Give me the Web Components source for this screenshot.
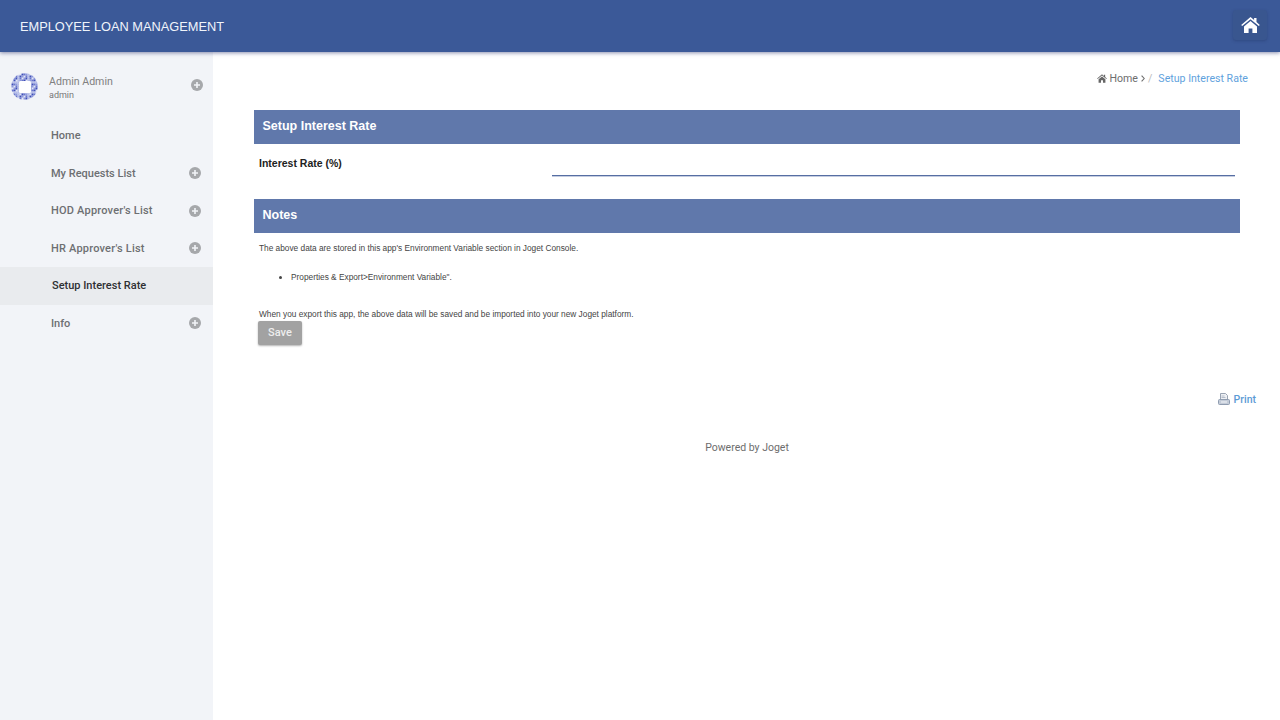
<!DOCTYPE html>
<html>
<head>
<meta charset="utf-8">
<title>Employee Loan Management</title>
<style>
  html, body { margin: 0; height: 100%; background: #fff; }
  body { font-family: Roboto, "Liberation Sans", sans-serif; overflow: hidden; }
</style>
</head>
<body>
<loan-app>
  <app-header slot="header" title-text="EMPLOYEE LOAN MANAGEMENT"></app-header>
  <side-bar slot="side">
    <user-box name="Admin Admin" login="admin"></user-box>
    <nav-item label="Home"></nav-item>
    <nav-item label="My Requests List" more></nav-item>
    <nav-item label="HOD Approver's List" more></nav-item>
    <nav-item label="HR Approver's List" more></nav-item>
    <nav-item label="Setup Interest Rate" active></nav-item>
    <nav-item label="Info" more></nav-item>
  </side-bar>
  <main-area slot="main">
    <bread-crumb slot="crumb" current="Setup Interest Rate"></bread-crumb>
    <form-section heading="Setup Interest Rate">
      <form-field label="Interest Rate (%)"></form-field>
    </form-section>
    <form-section heading="Notes">
      <note-text></note-text>
    </form-section>
    <save-button>Save</save-button>
    <print-link slot="print"></print-link>
    <span slot="footer">Powered by Joget</span>
  </main-area>
</loan-app>

<script>
const plusIcon = `<svg width="12" height="12" viewBox="0 0 12 12"><circle cx="6" cy="6" r="6" fill="#a6a8ab"/><path d="M6 3v6M3 6h6" stroke="#f2f4f8" stroke-width="1.6"/></svg>`;

class LoanApp extends HTMLElement {
  constructor() {
    super();
    this.attachShadow({ mode: 'open' });
    this.shadowRoot.innerHTML = `
      <style>
        :host { display: flex; flex-direction: column; height: 720px; }
        .body { flex: 1; display: flex; min-height: 0; }
        ::slotted([slot=side]) { flex: 0 0 213px; }
        ::slotted([slot=main]) { flex: 1; min-width: 0; }
      </style>
      <slot name="header"></slot>
      <div class="body"><slot name="side"></slot><slot name="main"></slot></div>
    `;
  }
}

class AppHeader extends HTMLElement {
  constructor() {
    super();
    this.attachShadow({ mode: 'open' });
  }
  connectedCallback() {
    this.shadowRoot.innerHTML = `
      <style>
        :host {
          display: flex; align-items: center; justify-content: space-between;
          height: 52px; box-sizing: border-box; padding: 0 13px 0 20px;
          background: #3b5998; color: #f0f4fb;
          box-shadow: 0 1px 4px rgba(40,50,110,.55);
          position: relative; z-index: 2;
        }
        .title { font-family: "Liberation Sans", Arial, sans-serif; font-size: 12.8px; }
        .home {
          width: 34px; height: 30px; display: flex; align-items: center; justify-content: center;
          background: #39568f; border-radius: 3px; box-shadow: 0 1px 3px rgba(30,45,90,.35);
          position: relative; top: -1px;
        }
      </style>
      <span class="title">${this.getAttribute('title-text')}</span>
      <span class="home">
        <svg width="19" height="16" viewBox="0 0 19 16"><path fill="#fff" d="M9.5 0 .2 7.9l1 1.2L9.5 2.2l8.3 6.9 1-1.2-3.3-2.8V1h-2.4v2.1zM3 9.4V16h4.6v-4.5h3.8V16H16V9.4L9.5 4z"/></svg>
      </span>
    `;
  }
}

class SideBar extends HTMLElement {
  constructor() {
    super();
    this.attachShadow({ mode: 'open' });
    this.shadowRoot.innerHTML = `
      <style>
        :host { display: flex; flex-direction: column; background: #f2f4f8; padding-top: 13px; box-sizing: border-box; }
      </style>
      <slot></slot>
    `;
  }
}

class UserBox extends HTMLElement {
  constructor() {
    super();
    this.attachShadow({ mode: 'open' });
  }
  connectedCallback() {
    // identicon-like speckle: a grid of cells inside the circle, skipping some
    let dots = '';
    for (let row = 0; row < 13; row++) {
      for (let col = 0; col < 13; col++) {
        const x = col * 2 + 0.5, y = row * 2 + 0.5;
        if (Math.hypot(x + 1 - 13.5, y + 1 - 13.5) > 13) continue;
        const n = (row * 7 + col * 11 + row * col) % 5;
        if (n > 3) continue;
        dots += `<rect x="${x}" y="${y}" width="2" height="2" fill="${n === 0 ? '#3f4fb8' : n === 1 ? '#6a77cc' : n === 2 ? '#8d98dc' : '#b4bce8'}"/>`;
      }
    }
    this.shadowRoot.innerHTML = `
      <style>
        :host { display: flex; align-items: center; height: 44px; padding: 0 11px; margin-bottom: 8px; color: #777; }
        svg.avatar { flex: none; margin-right: 11px; position: relative; top: -1px; }
        .who { flex: 1; display: flex; flex-direction: column; gap: 0; }
        .name { font-size: 10.6px; line-height: 16px; color: #808080; }
        .login { font-size: 9px; line-height: 11px; color: #777; }
        .plus { display: flex; position: relative; top: -2px; left: 1px; }
      </style>
      <svg class="avatar" width="27" height="27" viewBox="0 0 27 27">
        <defs>
          <filter id="soft"><feGaussianBlur stdDeviation=".4"/></filter>
          <clipPath id="round"><circle cx="13.5" cy="13.5" r="13.5"/></clipPath>
        </defs>
        <circle cx="13.5" cy="13.5" r="13.5" fill="#e4e7f6"/>
        <g clip-path="url(#round)"><g filter="url(#soft)">${dots}</g></g>
        <rect x="8" y="8" width="12" height="12" rx="1.5" fill="#fff"/>
      </svg>
      <div class="who">
        <span class="name">${this.getAttribute('name')}</span>
        <span class="login">${this.getAttribute('login')}</span>
      </div>
      <span class="plus">${plusIcon}</span>
    `;
  }
}

class NavItem extends HTMLElement {
  constructor() {
    super();
    this.attachShadow({ mode: 'open' });
  }
  connectedCallback() {
    const more = this.hasAttribute('more');
    const label = this.getAttribute('label');
    this.shadowRoot.innerHTML = `
      <style>
        :host {
          display: flex; align-items: center; justify-content: space-between;
          height: 37.5px; box-sizing: border-box; padding: 0 12px 0 51px;
          font-size: 11px; font-weight: 500; color: #6d6f72;
        }
        :host([active]) { background: #e9ebee; color: #2f3033; padding-left: 52px; }
        .spaced { letter-spacing: .2px; }
        span.plus { display: flex; }
      </style>
      <span class="${label.includes("'") ? 'spaced' : ''}">${label}</span>
      ${more ? `<span class="plus">${plusIcon}</span>` : ''}
    `;
  }
}

class MainArea extends HTMLElement {
  constructor() {
    super();
    this.attachShadow({ mode: 'open' });
    this.shadowRoot.innerHTML = `
      <style>
        :host { display: block; padding: 0 40px 0 41px; box-sizing: border-box; }
        .crumb { height: 58px; display: flex; justify-content: flex-end; padding-top: 20px; box-sizing: border-box; margin-right: -8px; }
        .print { display: flex; justify-content: flex-end; margin: 46px -16px 0 0; }
        .footer { text-align: center; margin-top: 37px; font: 10.5px/13px Roboto, sans-serif; color: #6d6d6d; }
      </style>
      <div class="crumb"><slot name="crumb"></slot></div>
      <slot></slot>
      <div class="print"><slot name="print"></slot></div>
      <div class="footer"><slot name="footer"></slot></div>
    `;
  }
}

class BreadCrumb extends HTMLElement {
  constructor() {
    super();
    this.attachShadow({ mode: 'open' });
  }
  connectedCallback() {
    this.shadowRoot.innerHTML = `
      <style>
        :host { display: flex; align-items: center; height: 12px; font-size: 10.6px; color: #6e6e6e; }
        svg.h { margin-right: 2px; }
        svg.c { margin: 0 0 0 3px; }
        .sep { color: #bbb; margin: 0 6px 0 3px; }
        .cur { color: #5fa2dd; }
      </style>
      <svg class="h" width="10" height="9" viewBox="0 0 19 16"><path fill="#666" d="M9.5 0 .2 7.9l1 1.2L9.5 2.2l8.3 6.9 1-1.2-3.3-2.8V1h-2.4v2.1zM3 9.4V16h4.6v-4.5h3.8V16H16V9.4L9.5 4z"/></svg>
      <span>Home</span>
      <svg class="c" width="4" height="7" viewBox="0 0 4 7"><path d="M.6.6 3.2 3.5.6 6.4" fill="none" stroke="#6e6e6e" stroke-width="1.1"/></svg>
      <span class="sep">/</span>
      <span class="cur">${this.getAttribute('current')}</span>
    `;
  }
}

class FormSection extends HTMLElement {
  constructor() {
    super();
    this.attachShadow({ mode: 'open' });
  }
  connectedCallback() {
    this.shadowRoot.innerHTML = `
      <style>
        :host { display: block; font-family: "Liberation Sans", Arial, sans-serif; }
        h2 {
          margin: 0; height: 33.5px; line-height: 33px; padding: 0 8.5px; box-sizing: border-box;
          background: #6078ab; color: #fff; font-size: 12.5px; font-weight: 700;
        }
      </style>
      <h2>${this.getAttribute('heading')}</h2>
      <slot></slot>
    `;
  }
}

class FormField extends HTMLElement {
  constructor() {
    super();
    this.attachShadow({ mode: 'open' });
  }
  connectedCallback() {
    this.shadowRoot.innerHTML = `
      <style>
        :host { display: flex; height: 55.5px; padding: 0 5px; box-sizing: border-box; }
        label { flex: 0 0 293px; font-size: 10.5px; font-weight: 700; color: #222; padding-top: 13px; }
        .line { flex: 1; height: 32px; box-sizing: border-box; border-bottom: 1px solid #566ea3; box-shadow: 0 1px 0 #c5cde0; }
      </style>
      <label>${this.getAttribute('label')}</label>
      <div class="line"></div>
    `;
  }
}

class NoteText extends HTMLElement {
  constructor() {
    super();
    this.attachShadow({ mode: 'open' });
    this.shadowRoot.innerHTML = `
      <style>
        :host { display: block; padding: 10px 5px 0; font-size: 8.3px; line-height: 10px; color: #444; }
        p { margin: 0; }
        ul { margin: 19px 0 27px; padding-left: 32px; }
      </style>
      <p>The above data are stored in this app's Environment Variable section in Joget Console.</p>
      <ul><li>Properties &amp; Export&gt;Environment Variable".</li></ul>
      <p>When you export this app, the above data will be saved and be imported into your new Joget platform.</p>
    `;
  }
}

class SaveButton extends HTMLElement {
  constructor() {
    super();
    this.attachShadow({ mode: 'open' });
    this.shadowRoot.innerHTML = `
      <style>
        :host { display: block; padding: 2px 4px 0; }
        button {
          display: block; width: 44px; height: 24px; padding: 0; border: 0; border-radius: 2px;
          background: #a2a2a2; color: #eee; font: 500 11px Roboto, sans-serif;
          box-shadow: 0 1px 2px rgba(0,0,0,.3);
        }
      </style>
      <button><slot></slot></button>
    `;
  }
}

class PrintLink extends HTMLElement {
  constructor() {
    super();
    this.attachShadow({ mode: 'open' });
    this.shadowRoot.innerHTML = `
      <style>
        :host { display: flex; align-items: center; gap: 4px; font-size: 10.5px; font-weight: 500; color: #5b9bd5; position: relative; top: 2px; }
      </style>
      <svg width="12" height="12" viewBox="0 0 12 12">
        <path d="M2.5.5h5l2 2v9h-7z" fill="#eef0f4" stroke="#9aa4b3"/>
        <rect x=".5" y="6.5" width="11" height="5" rx="1" fill="#c3cbd7" stroke="#8f9cb0"/>
        <path d="M3.5 3h3M3.5 4.5h4" stroke="#a8b2c2" stroke-width=".8"/>
        <path d="M3 9h6" stroke="#f4f6fa"/>
      </svg>
      <span>Print</span>
    `;
  }
}

customElements.define('loan-app', LoanApp);
customElements.define('app-header', AppHeader);
customElements.define('side-bar', SideBar);
customElements.define('user-box', UserBox);
customElements.define('nav-item', NavItem);
customElements.define('main-area', MainArea);
customElements.define('bread-crumb', BreadCrumb);
customElements.define('form-section', FormSection);
customElements.define('form-field', FormField);
customElements.define('note-text', NoteText);
customElements.define('save-button', SaveButton);
customElements.define('print-link', PrintLink);
</script>
</body>
</html>
